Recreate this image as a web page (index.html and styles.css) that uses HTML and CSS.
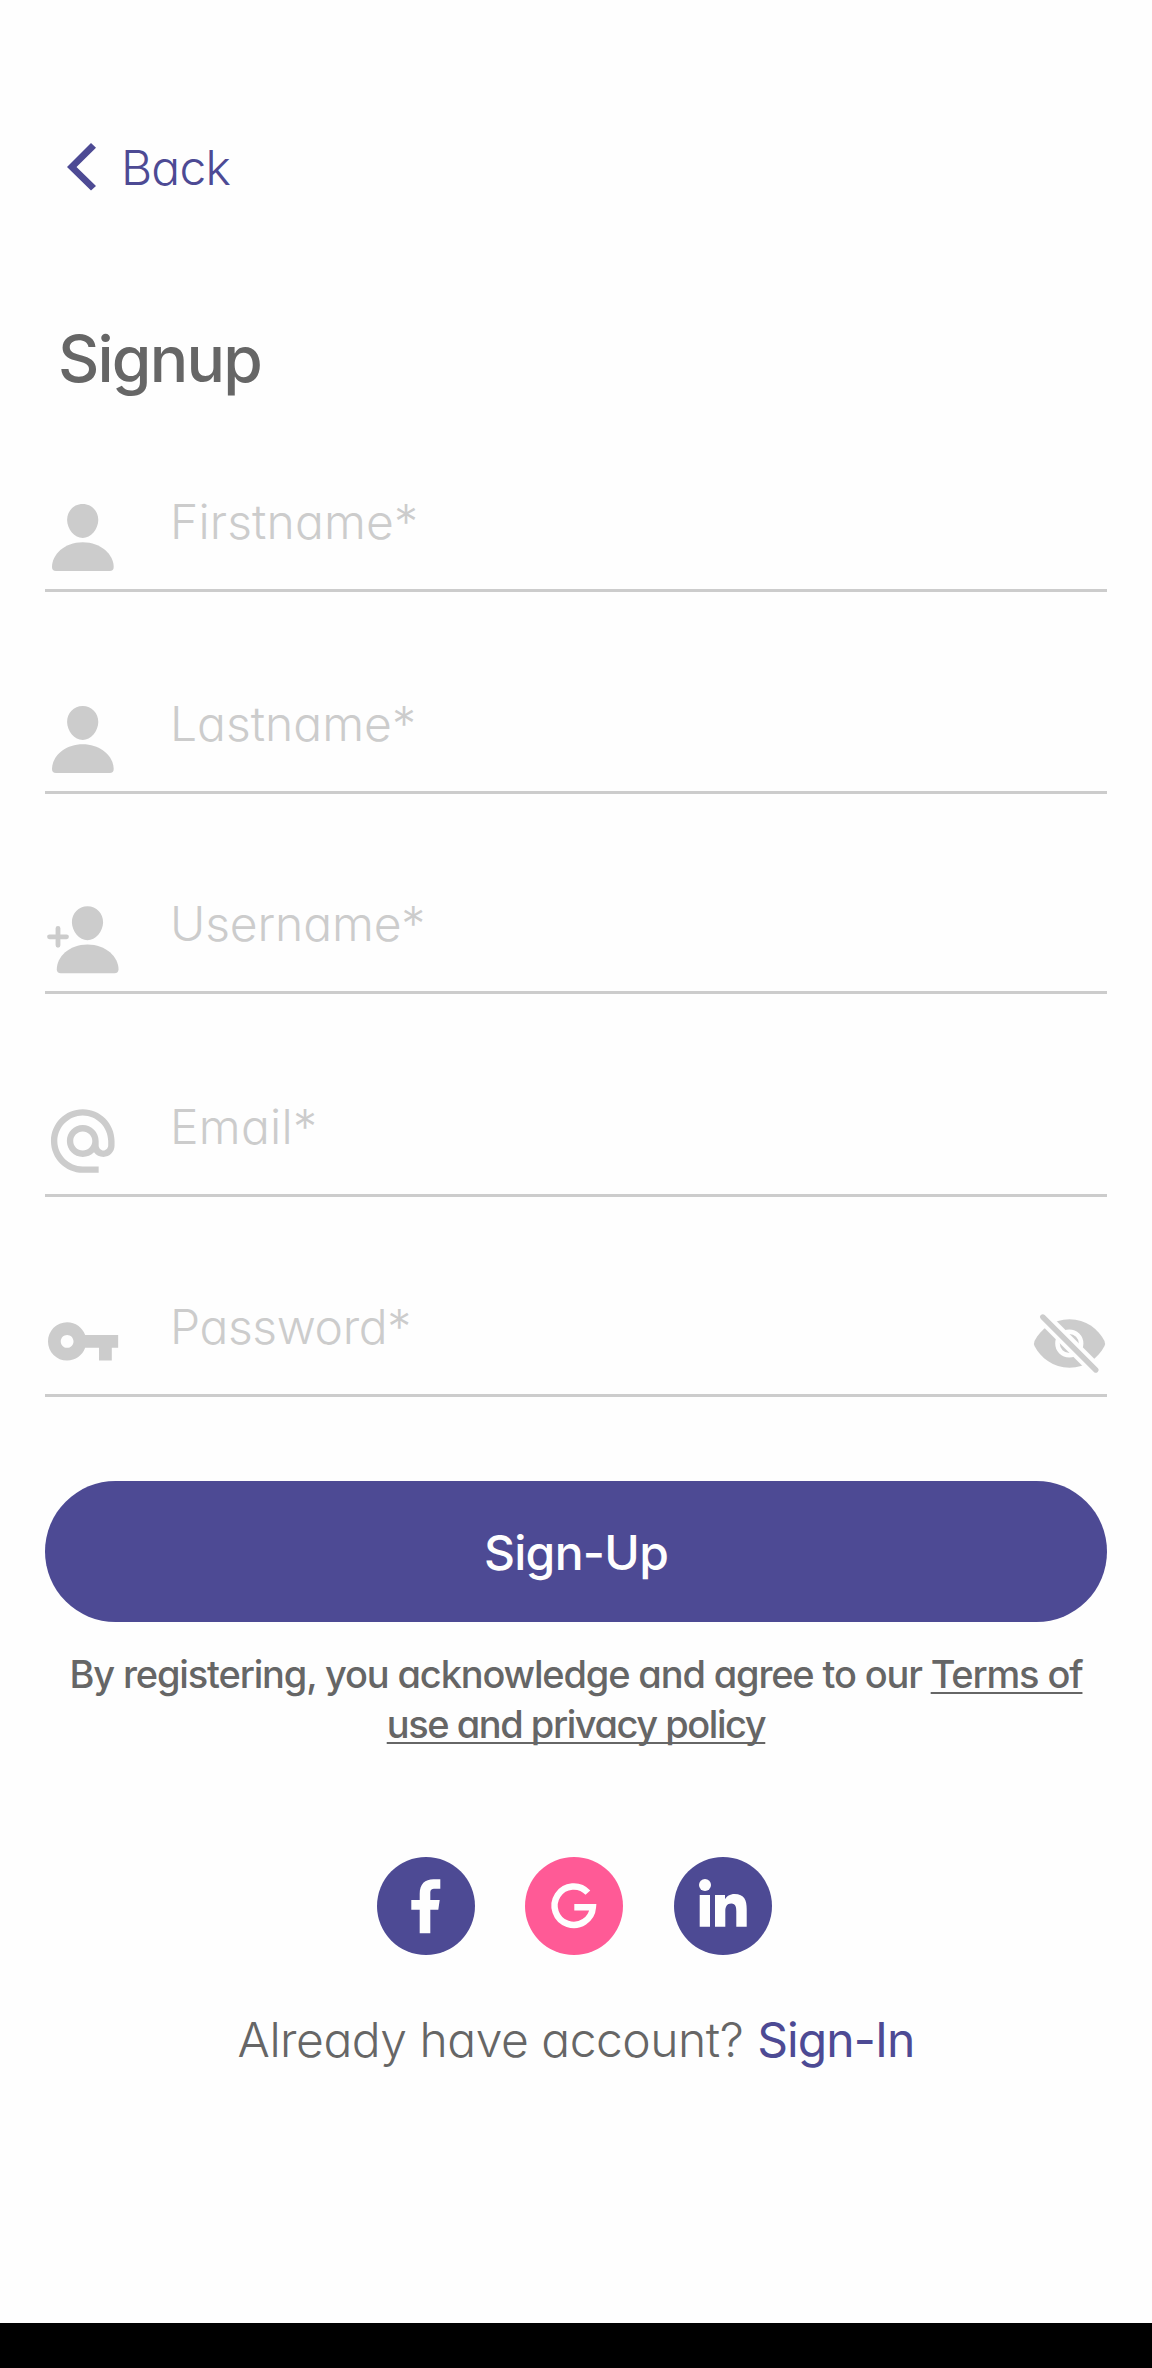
FILE: index.html
```html
<!DOCTYPE html>
<html lang="en">
<head>
<meta charset="utf-8">
<title>Signup</title>
<link rel="stylesheet" href="styles.css">
</head>
<body>
<svg class="defs" aria-hidden="true">
  <symbol id="person" viewBox="0 0 76 80">
    <path d="M37.7 4c9 0 15.6 7 15.6 16s-7.5 18-15.6 18-15.6-9-15.6-18 6.6-16 15.6-16z"/>
    <path d="M11 71q-4 0-4-4c0-12 12-24.7 30.7-24.7s31 12.7 31 24.7q0 4-4 4z"/>
  </symbol>
</svg>
<main class="page">
  <a class="back">
    <svg class="chevron" viewBox="0 0 30 48"><path d="M24 0l5 4.8L9.5 24 29 43l-5 4.6L0 24z"/></svg>
    <span class="back-text">Back</span>
  </a>
  <h1 class="title">Signup</h1>
  <form class="fields">
    <div class="field">
      <svg class="icon"><use href="#person"/></svg>
      <span class="label first">Firstname*</span>
    </div>
    <div class="field">
      <svg class="icon"><use href="#person"/></svg>
      <span class="label last">Lastname*</span>
    </div>
    <div class="field">
      <svg class="icon" viewBox="0 0 76 80">
        <use href="#person" x="4.8" y=".3" width="76" height="80"/>
        <path class="plus" d="M4.5 34.8h17M13 26.3v17"/>
      </svg>
      <span class="label user">Username*</span>
    </div>
    <div class="field">
      <svg class="icon" viewBox="0 0 76 80"><path transform="translate(-.4 -2) scale(3.18)" d="M12 1.95c-5.52 0-10 4.48-10 10s4.48 10 10 10h5v-2h-5c-4.34 0-8-3.66-8-8s3.66-8 8-8 8 3.66 8 8v1.43c0 .79-.71 1.57-1.5 1.57s-1.5-.78-1.5-1.57v-1.43c0-2.76-2.24-5-5-5s-5 2.24-5 5 2.24 5 5 5c1.38 0 2.64-.56 3.54-1.47.65.89 1.77 1.47 2.96 1.47 1.97 0 3.5-1.6 3.5-3.57v-1.43c0-5.52-4.48-10-10-10zm0 13c-1.66 0-3-1.34-3-3s1.34-3 3-3 3 1.34 3 3-1.34 3-3 3z"/></svg>
      <span class="label email">Email*</span>
    </div>
    <div class="field">
      <svg class="icon" viewBox="0 0 76 80"><path transform="translate(-.2 -1.9) scale(3.19)" d="M12.65 10C11.83 7.67 9.61 6 7 6c-3.31 0-6 2.69-6 6s2.69 6 6 6c2.61 0 4.83-1.67 5.65-4H17v4h4v-4h2v-4H12.65zM7 14c-1.1 0-2-.9-2-2s.9-2 2-2 2 .9 2 2-.9 2-2 2z"/></svg>
      <span class="label pass">Password*</span>
      <svg class="icon eye" viewBox="0 0 74 80">
        <path d="M1.5 36C8 24 20 14.3 36.5 14.3S65 24 71.5 36q1 2.5 0 5C65 53 53 62.7 36.5 62.7S8 53 1.5 41q-1-2.5 0-5z"/>
        <circle class="ring" cx="36.3" cy="38.5" r="11.8"/>
        <path class="gap" d="M4 6l66 66"/>
        <path class="slash" d="M9.8 12l53 53"/>
      </svg>
    </div>
  </form>
  <button class="submit"><span class="submit-text">Sign-Up</span></button>
  <p class="terms"><span class="terms-a">By registering, you acknowledge and agree to our <a class="link">Terms of</a></span><br><a class="link terms-b">use and privacy policy</a></p>
  <div class="social">
    <svg class="badge" viewBox="0 0 98 98"><circle cx="49" cy="49" r="49"/><path class="mark" d="M42.7 76.3V52.7H34.3V43h8.4v-6C42.7 27 48 22.3 56.5 22.3h6.8v9.4H58c-3.5 0-4.7 1.3-4.7 4.3v7h9.4l-1.4 9.7h-8v23.6z"/></svg>
    <svg class="badge google" viewBox="0 0 98 98"><circle cx="49" cy="49" r="49"/><path class="g" d="M62.9 35.7A19.2 19.2 0 1 0 67.9 50.2H49.3"/></svg>
    <svg class="badge" viewBox="0 0 98 98"><circle cx="49" cy="49" r="49"/><g class="mark"><circle cx="31" cy="28" r="6"/><path d="M25.7 38H36v31.7H25.7zM41 38h10v4.3c1.5-2.7 5-5.2 9.5-5.2 10 0 12.2 6.5 12.2 15v17.6H62.3V54.5c0-4-.5-8-5-8s-6 3.5-6 8v15.2H41z"/></g></svg>
  </div>
  <p class="signin"><span class="ask">Already have account?</span><a class="signin-link">Sign-In</a></p>
  <div class="navbar"></div>
</main>
</body>
</html>
```
FILE: styles.css
```css
* { box-sizing: border-box; }
body {
  margin: 0;
  background: #fefefe;
  color: #666;
  font-family: Inter, "Open Sans", sans-serif;
  font-feature-settings: "cv11";
  font-size: 48px;
  font-weight: 300;
}
.defs { position: absolute; width: 0; height: 0; }
.page {
  display: flex;
  flex-direction: column;
  width: 1152px;
  height: 2368px;
  padding: 138px 45px 0;
}
.back {
  display: flex;
  align-items: center;
  height: 60px;
  padding-left: 22px;
  color: #4d4a94;
}
.chevron { width: 30px; height: 48px; fill: #4d4a94; margin-right: 24px; margin-top: -3px; }
.back-text { line-height: 60px; letter-spacing: -.8px; }
.title {
  margin: 121px 0 0 13px;
  height: 80px;
  line-height: 80px;
  font-size: 64px;
  font-weight: 500;
  letter-spacing: -1.8px;
  white-space: nowrap;
}
.fields {
  display: grid;
  grid-template-rows: 201px 202px 200px 203px 200px;
  margin-top: -8px;
}
.field {
  display: flex;
  align-items: flex-end;
  border-bottom: 3px solid #ccc;
  color: #ccc;
}
.icon {
  flex: none;
  width: 76px;
  height: 80px;
  margin-bottom: 9px;
  fill: #ccc;
  overflow: visible;
}
.eye { width: 74px; margin-left: auto; }
.plus { stroke: #ccc; stroke-width: 4.8; stroke-linecap: round; }
.ring { fill: none; stroke: #fefefe; stroke-width: 4.6; }
.gap { stroke: #fefefe; stroke-width: 13.5; }
.slash { stroke: #ccc; stroke-width: 5.4; stroke-linecap: round; }
.label { margin: 0 0 37px 49px; line-height: 60px; white-space: nowrap; }
.first { letter-spacing: .15px; }
.user { letter-spacing: -.15px; }
.email { letter-spacing: .25px; }
.pass { letter-spacing: -.4px; }
.submit {
  display: flex;
  align-items: center;
  justify-content: center;
  height: 141px;
  margin-top: 84px;
  border: 0;
  border-radius: 71px;
  background: #4d4a94;
  color: #fefefe;
  font: inherit;
  font-weight: 500;
}
.submit-text { letter-spacing: -.7px; padding-top: 1px; }
.terms {
  margin: 28px 0 0;
  text-align: center;
  font-size: 38px;
  font-weight: 500;
  line-height: 49.5px;
  letter-spacing: -1.16px;
  white-space: nowrap;
}
.terms-b { letter-spacing: -1.45px; }
.link {
  text-decoration: underline;
  text-decoration-thickness: 2px;
  text-decoration-skip-ink: none;
  text-underline-offset: 4px;
}
.social { display: flex; justify-content: center; gap: 50.5px; margin: 108px 4px 0 0; }
.badge { width: 98px; height: 98px; fill: #4d4a94; }
.google { fill: #ff5a96; }
.mark { fill: #fefefe; }
.g { fill: none; stroke: #fefefe; stroke-width: 6.4; }
.signin {
  display: flex;
  justify-content: center;
  gap: 14px;
  margin: 55px 0 0;
  line-height: 60px;
  white-space: nowrap;
}
.ask { letter-spacing: -.5px; }
.signin-link { color: #4d4a94; font-weight: 400; letter-spacing: -.9px; }
.navbar { height: 45px; margin: auto -45px 0; background: #000; }
```
